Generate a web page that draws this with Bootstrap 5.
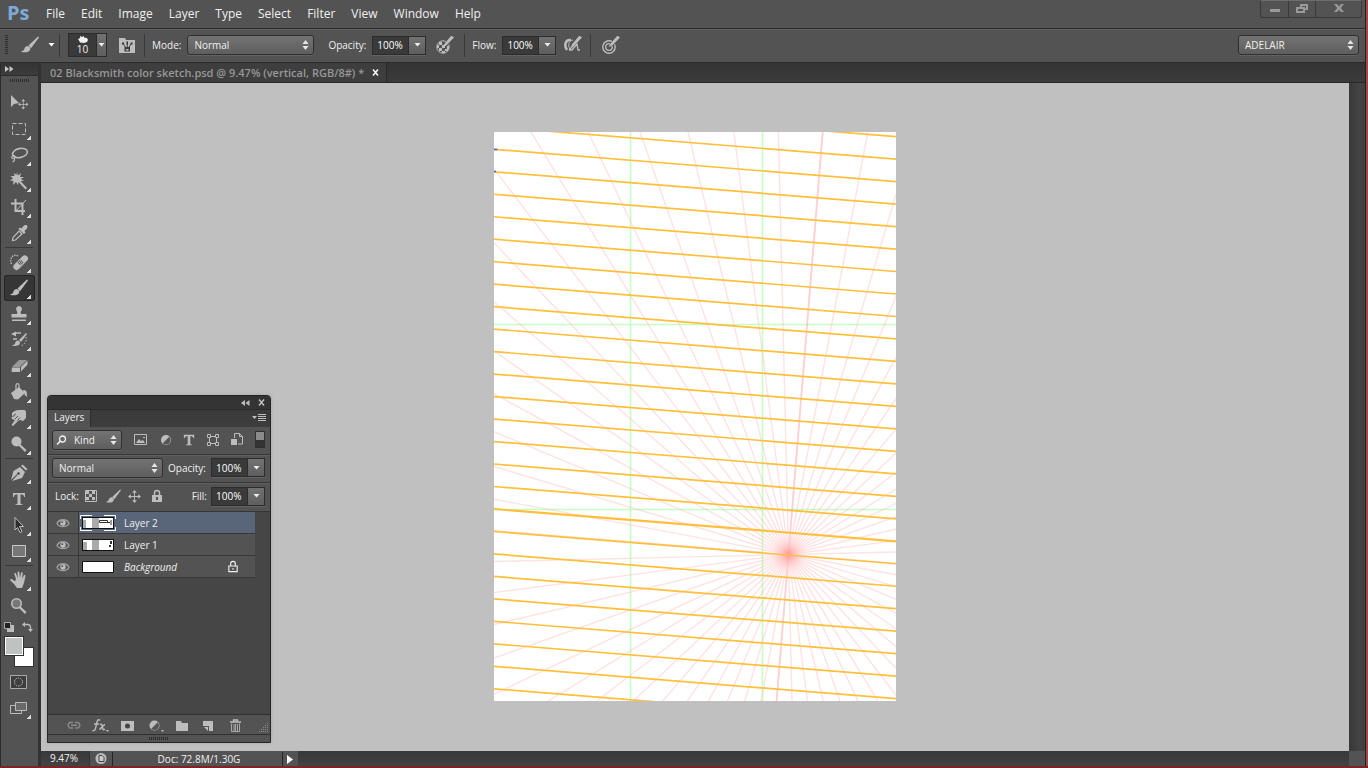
<!DOCTYPE html>
<html lang="en" data-bs-theme="dark">
<head>
<meta charset="utf-8">
<meta name="viewport" content="width=device-width, initial-scale=1">
<title>02 Blacksmith color sketch.psd</title>
<link rel="stylesheet" href="https://cdn.jsdelivr.net/npm/bootstrap@5.3.0/dist/css/bootstrap.min.css">
<style>
:root{--bar:#535353;--line:#2b2b2b;--deep:#3a3a3a;--icon:#bdbdbd;--txt:#f0f0f0}
body{font:10px/14px "Open Sans","Noto Sans",sans-serif;color:var(--txt);background:var(--bar);overflow:hidden}
svg{display:block;fill:currentColor}
button,.tool{background:none;border:0;padding:0;color:var(--icon);display:flex;align-items:center;justify-content:center}
a{color:inherit;text-decoration:none}
.s{fill:none;stroke:currentColor}
.app{border-right:1px solid #222}
.edge{width:2px;background:#a0484b}
.foot-edge{height:2px;background:#7d2226}
.menubar{height:29px;border-bottom:1px solid var(--line);padding-left:7px}
.logo{font:bold 20px/26px "Open Sans",sans-serif;color:#7ca9d8;width:31px}
.menubar .menu{font-size:12px;line-height:28px;padding:0 8px}
.winbtns{height:18px;border:1px solid #3a3a3a;border-top:1px solid #6c6c6c;border-radius:0 0 3px 3px;margin-right:3px;color:#9a9a9a}
.winbtns button{width:27px;color:#9a9a9a}
.winbtns button+button{border-left:1px solid #3a3a3a}
.winbtns .close-w{width:46px}
.options{height:34px;border-top:1px solid #626262;border-bottom:1px solid var(--line);padding:0 6px 2px 5px}
.grip{width:3px;height:20px;background:repeating-linear-gradient(#2d2d2d 0 1px,transparent 1px 2px)}
.vsep{width:1px;height:23px;background:#393939;margin:0 7px}
.m3{margin-left:3px}.m6{margin-left:6px}.m10{margin-left:10px}.m12{margin-left:12px}.m14{margin-left:14px}
.sel{appearance:none;height:20px;border:1px solid #303030;border-radius:3px;color:var(--txt);font:inherit;padding:0 6px;outline:0;
 background:url("data:image/svg+xml,%3Csvg xmlns='http://www.w3.org/2000/svg' width='7' height='10'%3E%3Cpath fill='%23e6e6e6' d='M3.500 0L6.500 4H.5zM3.500 10L.5 6h6z'/%3E%3C/svg%3E") no-repeat right 4px center,linear-gradient(#737373,#5e5e5e);box-shadow:0 1px 0 #626262}
.mode{width:127px}.work{width:121px}.kind{width:70px;padding-left:21px}.blend{width:111px}
.pct{height:19px;border:1px solid #2c2c2c;box-shadow:0 1px 0 #626262;background:#3a3a3a;width:54px}
.pct input{width:35px;background:#3a3a3a;border:0;color:#fff;font:inherit;padding:0 0 0 4px;outline:0}
.pct button,.preset button{flex:1;background:linear-gradient(#727272,#5e5e5e);border-left:1px solid #2c2c2c;color:#eee}
.preset{width:39px;height:24px;border:1px solid #2c2c2c;background:#3a3a3a}
.preset .tip{width:27px;line-height:11px}
.rail{width:41px;border-left:1px solid var(--line);border-right:3px solid #333;background:var(--bar)}
.rail-head{height:13px;background:linear-gradient(#343434,#3c3c3c);border-bottom:1px solid var(--line);padding-left:4px;color:#c8c8c8}
.rail-grip{height:14px;padding-bottom:6px}
.dots{width:20px;height:3px;background:repeating-linear-gradient(90deg,#2d2d2d 0 1px,transparent 1px 2px)}
.tool{width:31px;height:26px;margin-left:3px;padding-right:2px;position:relative;border-radius:3px}
.tool.on{background:#363636;box-shadow:inset 0 0 0 1px #262626}
.more::after{content:"";position:absolute;right:4px;bottom:2px;width:4px;height:4px;background:linear-gradient(135deg,transparent 50%,#ddd 50%)}
.rsep{height:1px;margin:1px 5px 1px 4px;background:#383838}
.mini{height:17px;padding:0 5px 2px 3px}
.swatches{height:31px;width:30px;margin:0 0 2px 3px;position:relative}
.swatches span{position:absolute;width:20px;height:20px;border:1px solid #303030}
.swatches .bgc{right:0;bottom:0;background:#fff}
.swatches .fgc{left:0;top:0;background:#c0c2c1;box-shadow:inset 0 0 0 1px #fff}
.tabs{height:20px;background:linear-gradient(#343434,#3b3b3b);border-bottom:1px solid #282828}
.doc-tab{font-weight:600;font-size:11px;color:#979797;padding:0 7px 0 9px;border-right:1px solid #282828;gap:8px;background:#3e3e3e}
.work-area{background:#c0c0c0;position:relative;min-width:0;padding-bottom:2px}
.vbar{width:16px;background:linear-gradient(90deg,#383838,#434343 60%,#404040)}
.status{height:15px;background:linear-gradient(#383838,#434343)}
.status .zoom{width:48px;padding-left:9px}
.status .info{background:var(--bar);border-left:1px solid #333}
.doc-size{width:171px;border-right:1px solid #333;padding-left:3px}
.corner{width:16px;background:var(--bar)}
.paper{width:402px;height:569px;background:#fff}
.panel{position:absolute;left:6px;top:312px;width:224px;height:348px;border:1px solid #262626;border-radius:4px 4px 0 0;background:var(--bar);box-shadow:0 0 3px #8888}
.panel-head{height:14px;background:#343434;border-bottom:1px solid #2a2a2a;border-radius:4px 4px 0 0;padding:0 5px;gap:8px;color:#c8c8c8}
.panel-tabs{height:17px;background:linear-gradient(#3a3a3a,#3d3d3d);padding-right:4px}
.panel-tabs a{background:var(--bar);padding:0 6px;line-height:15px;border-right:1px solid #2d2d2d}
.prow{height:28px;border-bottom:1px solid #363636;padding:0 5px 2px 4px;box-shadow:0 1px 0 #606060}
.toggle{width:10px;height:17px;background:linear-gradient(#8b8b8b 50%,#333 50%);border:1px solid #303030}
.layers{background:#464646;padding-right:15px;border-top:1px solid #363636}
.lay{height:22px;border-bottom:1px solid #383838;background:var(--bar)}
.lay .eye{width:31px;height:21px;border-right:1px solid #383838;background:var(--bar)}
.lay.cur{background:#596578}
.lay .nm{padding-left:8px;flex:1}
.lay .thumb{margin-left:1px}
.pfoot{height:20px;border-top:1px solid #2f2f2f;padding:2px 1px 0 12px}
.pfoot button{width:27px}
.pgrip{height:8px;border-top:1px solid #303030}
</style>
</head>
<body>
<svg width="0" height="0" class="position-absolute" aria-hidden="true">
 <symbol id="down" viewBox="0 0 7 4"><path d="M.5 0h6L3.500 3.500z"/></symbol>
 <symbol id="brush" viewBox="0 0 20 18"><path d="M19 1.500L18 .5 8.500 9.500l2.500 2.800zM8 10c-2 0-3.200 1.200-3.700 3C4 14.500 2.500 15 1 15.500c3 1.500 8 1 9-1.500.5-1.300.3-2-.3-2.800z"/></symbol>
 <symbol id="eye" viewBox="0 0 14 10"><path d="M1 5.500C3 .5 11 .5 13 5.500 11 9.500 3 9.500 1 5.500z" fill="none" stroke="#a0a0a0" stroke-width="1.300"/><circle cx="7" cy="5" r="2.700"/><circle cx="6.300" cy="4.200" r=".9" fill="#555"/></symbol>
 <symbol id="lock" viewBox="0 0 12 14"><path d="M3.500 6V4a2.500 2.500 0 0 1 5 0v2" class="s" stroke-width="1.500"/><path fill-rule="evenodd" d="M1 6h10v7H1zm4 2v3h2V8z"/></symbol>
 <symbol id="typ" viewBox="0 0 14 14"><path d="M1 1h12v4h-1c0-2-1-2.500-3.500-2.500V11c0 1 .5 1.200 2 1.200V13h-7v-.8c1.500 0 2-.2 2-1.200V2.500C3 2.500 2 3 2 5H1z"/></symbol>
 <symbol id="half" viewBox="0 0 12 12"><circle cx="6" cy="6" r="5"/><path d="M9.200 2.800a4.500 4.500 0 0 1-6.400 6.400z" fill="#555"/></symbol>
 <symbol id="move4" viewBox="0 0 14 14"><path d="M7 0l2.500 3h-2v3.500H11v-2L14 7l-3 2.500v-2H7.500V11h2L7 14l-2.500-3h2V7.500H3v2L0 7l3-2.500v2h3.500V3h-2z"/></symbol>
 <symbol id="pen-s" viewBox="0 0 18 18"><path d="M17 1.500L10 9l-2 .8L9 8l6.500-7.500z" stroke="currentColor" stroke-width="1.300"/></symbol>
</svg>

<div class="d-flex flex-column vh-100">
<div class="d-flex flex-grow-1">
<div class="app d-flex flex-column flex-grow-1">
 <header class="menubar d-flex align-items-start">
  <span class="logo">Ps</span>
  <nav class="d-flex flex-grow-1" aria-label="Application">
   <a class="menu" href="#">File</a><a class="menu" href="#">Edit</a><a class="menu" href="#">Image</a><a class="menu" href="#">Layer</a><a class="menu" href="#">Type</a><a class="menu" href="#">Select</a><a class="menu" href="#">Filter</a><a class="menu" href="#">View</a><a class="menu" href="#">Window</a><a class="menu" href="#">Help</a>
  </nav>
  <div class="winbtns d-flex">
   <button aria-label="Minimize"><svg width="12" height="12"><path d="M1 6h10v3H1z"/></svg></button>
   <button aria-label="Restore"><svg width="12" height="12"><path fill-rule="evenodd" d="M4 1h8v6H9v3H0V4h4zm2 2v1h3v1h1V3zM2 6v2h5V6z"/></svg></button>
   <button class="close-w" aria-label="Close"><svg width="12" height="12"><path d="M1 1h3l2 2.500L8 1h3L7.700 5 11 9H8L6 6.700 4 9H1l3.300-4z"/></svg></button>
  </div>
 </header>

 <div class="options d-flex align-items-center">
  <div class="grip"></div>
  <button class="m12" aria-label="Brush tool"><svg width="20" height="18"><use href="#brush"/></svg></button>
  <button class="ms-1 text-white" aria-label="Tool presets"><svg width="7" height="4" class="mx-1"><use href="#down"/></svg></button>
  <div class="vsep ms-0 me-2"></div>
  <div class="preset d-flex">
   <div class="tip text-center"><svg width="12" height="10" class="mx-auto"><path d="M1 5l2-1 0-2 2 1 2-1 0 1.500 3 .5 1 2-1 2-3 1-4-.5-1-2z"/></svg>10</div>
   <button aria-label="Brush picker"><svg width="7" height="4"><use href="#down"/></svg></button>
  </div>
  <button class="ms-2 ps-1" aria-label="Brush panel"><svg width="17" height="17"><path d="M0 1h6l1 2h9v13H0z"/><path d="M3 5.500h2v2H3zM7.500 4.500h1.500v3H7.500zM11.500 5.500h2v2h-2z" fill="#333"/><path d="M4.500 7l2.500 4M12 7l-2.500 4M8.300 7v4" stroke="#444"/><path fill-rule="evenodd" d="M5.500 10h5.500v4.500H5.500zM7 12v1.500h2.500V12z" fill="#3c3c3c"/></svg></button>
  <div class="vsep ms-2 me-1"></div>
  <label for="mode" class="m3">Mode:</label>
  <select id="mode" class="sel mode m6"><option>Normal</option></select>
  <label for="op" class="m14">Opacity:</label>
  <div class="pct d-flex m6"><input id="op" value="100%"><button aria-label="Opacity slider"><svg width="7" height="4"><use href="#down"/></svg></button></div>
  <button class="m6 ps-1" aria-label="Pressure opacity"><svg width="18" height="18"><circle cx="7" cy="11" r="6.200" class="s"/><path d="M3 6h3v3H3zM9 6h2v3H9zM6 9h3v3H6zM1 9h2v3H1zM11 10h2v3h-2zM3 12h3v3H3zM9 13h3v2H9zM6 15h3v2H6z"/><path d="M17 1.500L9 9" stroke="#535353" stroke-width="4"/><use href="#pen-s"/></svg></button>
  <div class="vsep m10"></div>
  <label for="flow">Flow:</label>
  <div class="pct d-flex m6"><input id="flow" value="100%"><button aria-label="Flow slider"><svg width="7" height="4"><use href="#down"/></svg></button></div>
  <button class="ms-1 ps-1" aria-label="Airbrush"><svg width="18" height="18"><path d="M7 4C1 3 0 10 3 14" class="s" stroke-width="2.500"/><path d="M9 4C4 5 4 10 6 13" class="s"/><path d="M5 14l5-5M5 14h3l5-6 1 6h2" class="s" stroke-width="1.300"/><use href="#pen-s"/></svg></button>
  <div class="vsep ms-2"></div>
  <button class="ps-1" aria-label="Pressure size"><svg width="18" height="18"><circle cx="7" cy="11" r="6.200" class="s" stroke-width="1.400"/><circle cx="7" cy="11" r="3.300" class="s" stroke-width="1.300"/><path d="M17 1.500L9 9" stroke="#535353" stroke-width="4"/><use href="#pen-s"/></svg></button>
  <select class="sel work ms-auto" aria-label="Workspace"><option>ADELAIR</option></select>
 </div>

 <div class="d-flex flex-grow-1">
  <aside class="rail flex-shrink-0" aria-label="Tools">
   <div class="rail-head d-flex align-items-center"><svg width="9" height="6"><path d="M0 0l4 3-4 3zM4.500 0l4 3-4 3z"/></svg></div>
   <div class="rail-grip d-flex align-items-center justify-content-center"><div class="dots"></div></div>
   <button class="tool" aria-label="Move"><svg width="20" height="18"><path d="M2 1v12l3-3 5-1z"/><g transform="translate(9 5) scale(.75)"><use href="#move4" width="14" height="14"/></g></svg></button>
   <button class="tool more" aria-label="Marquee"><svg width="20" height="18"><path d="M3.500 3.500h13v11h-13z" class="s" stroke-dasharray="4 2"/></svg></button>
   <button class="tool more" aria-label="Lasso"><svg width="20" height="18"><ellipse cx="11" cy="7" rx="7.500" ry="4.500" class="s" stroke-width="1.600" transform="rotate(-12 11 7)"/><path d="M5 9.500c-3 0-3 3-.5 3s2-2.500.5-3M5 12.500c1 1.500 0 3-1.500 3.500" class="s" stroke-width="1.200"/></svg></button>
   <button class="tool more" aria-label="Magic wand"><svg width="20" height="18"><path d="M8 0l1 3.500L12 1l-1 4 4 0-3 2 3 2-3.500 0L18 16l-1.500 1.500L9.500 10 9 13l-2-3-3 3 .5-4L1 8.500 4 6.500 1.500 4 5.500 4 5 1l2.500 2z"/></svg></button>
   <button class="tool more" aria-label="Crop"><svg width="20" height="18"><path d="M6.500 1v12H16M2 5.500h11.500V17" class="s" stroke-width="2"/><path d="M7 13L17 2" class="s"/></svg></button>
   <button class="tool more" aria-label="Eyedropper"><svg width="20" height="18"><path d="M10 7l3 3-6.500 6-3 .5L4 13.500z" class="s" stroke-width="1.200"/><path d="M9.500 5l1.500-1.500 1.500 1L15 1.500c2-1.500 4.500.5 3 3L15.500 7l1 1.500L15 10z"/></svg></button>
   <div class="rsep"></div>
   <button class="tool more" aria-label="Healing brush"><svg width="20" height="18"><path d="M9 3c-5-3-9 3-6.500 8" class="s" stroke-width="1.300" stroke-dasharray="1.500 1"/><rect x="2.500" y="6.500" width="18" height="6.500" rx="3.200" transform="rotate(-45 11.500 9.500)"/><path d="M8.500 9.500l3-3 3 3-3 3z" fill="#666"/><path d="M10 9h1v1h-1zM12 9h1v1h-1zM11 7.500h1v1h-1zM11 10.500h1v1h-1z"/></svg></button>
   <button class="tool more on" aria-label="Brush"><svg width="20" height="18"><use href="#brush"/></svg></button>
   <button class="tool more" aria-label="Clone stamp"><svg width="20" height="18"><path d="M10 1a3 3 0 0 1 2.500 4.500C11.500 7 11.500 8 12 9h5.500v3.500H2.500V9H8c.5-1 .5-2-.5-3.500A3 3 0 0 1 10 1zM3 14.500h14V16H3z"/></svg></button>
   <button class="tool more" aria-label="History brush"><svg width="20" height="18"><path d="M18 3l-1-1-7 7 2 2zM9.500 9.500c-2 0-3 1-3.300 2.500-.3 1.500-2 2-3.500 2.500 3 1 7 .5 8-1.500.4-1 .3-1.500-.2-2.200z"/><path d="M12 2H6M4 8h4" class="s" stroke-width="1.500"/><path d="M2 3l5-2.500v5z"/><path d="M17 6c1 4-1 7-5 9" class="s" stroke-dasharray="1.500 1.500"/></svg></button>
   <button class="tool more" aria-label="Eraser"><svg width="20" height="18"><path d="M10 3h8l-7 7H3z" fill="#999"/><path d="M3 10.500h8V15H2.500zM12 10l6.500-6.500v4L12 14.500z"/></svg></button>
   <button class="tool more" aria-label="Paint bucket"><svg width="20" height="18"><path d="M7 8V2.500C7 0 10 0 10 2.500V8" class="s" stroke-width="1.200"/><path d="M2 10l8-6 6 6-7 6.500-4-.5z"/><path d="M14 7c4 0 4 2 4 7-2-1-2.500-3-3-4z"/></svg></button>
   <button class="tool more" aria-label="Smudge"><svg width="20" height="18"><path d="M3 4c2-2 4-3 7-3h6l1 2v6l-3 3-3-1-2 1-5 5-1.500-1L6 11l-3-1-.5-2L6 7 3 7z"/><path d="M7 5l-3 2M9 7l-3 3M11 8.500l-2.500 3" stroke="#555" fill="none"/></svg></button>
   <button class="tool more" aria-label="Dodge"><svg width="20" height="18"><circle cx="7.500" cy="6.500" r="5"/><path d="M11 9l6.500 6L16 17l-6.500-6.500z"/></svg></button>
   <div class="rsep"></div>
   <button class="tool more" aria-label="Pen"><svg width="20" height="18"><path d="M12 2l1.500-1.500 5 4.500L17 6.500zM11 3l5 5-3 6-10 3L8.500 11 8 10l-6 6L4.500 7z"/><circle cx="9.500" cy="9.500" r="1.300" fill="#444"/></svg></button>
   <button class="tool more" aria-label="Type"><svg width="14" height="14"><use href="#typ"/></svg></button>
   <button class="tool more" aria-label="Path selection"><svg width="20" height="18"><path d="M6 1.500l8.500 9h-4l2.500 5-2 1-2.500-5L6 14z" fill="#2c2c2c" stroke="#bbb"/></svg></button>
   <button class="tool more" aria-label="Rectangle"><svg width="20" height="18"><path d="M3.500 3.500h13v11h-13z" fill="#777" stroke="#c8c8c8"/></svg></button>
   <div class="rsep"></div>
   <button class="tool more" aria-label="Hand"><svg width="20" height="18"><path d="M7 8L5.300 3c-.3-1.300 1.200-1.500 1.600-.5L8.800 7 8.500 1.500C8.500.3 10.300.3 10.400 1.500L11 7l1-5c.3-1 1.800-.8 1.700.4L13.200 8l1.600-3.500c.6-1 2-.3 1.600.8L15 12l-2 5H8l-3-4-3.500-3.500c-1-1.300.5-2 1.500-1.200l3 2z"/></svg></button>
   <button class="tool" aria-label="Zoom"><svg width="20" height="18"><circle cx="7.500" cy="6.500" r="4.700" fill="#777" stroke="#bbb" stroke-width="1.600"/><path d="M11 9l6.500 6L16 17l-6.500-6.500z"/></svg></button>
   <div class="mini d-flex justify-content-between align-items-center">
    <button aria-label="Default colors"><svg width="10" height="10"><path d="M3 3h7v7H3z"/><path d="M.5.5h6v6h-6z" fill="#222" stroke="#aaa"/></svg></button>
    <button aria-label="Swap colors"><svg width="11" height="10"><path d="M2 2.500h3.500q3 0 3 3V8" class="s" stroke-width="1.300"/><path d="M0 2.500L3 0v5zM8.500 10L6 7h5z"/></svg></button>
   </div>
   <div class="swatches"><span class="bgc"></span><span class="fgc"></span></div>
   <button class="tool" aria-label="Quick mask"><svg width="18" height="14"><path d="M.5.5h16v13H.5z" fill="#3e3e3e" stroke="#aaa"/><circle cx="8.500" cy="7" r="4" class="s" stroke-dasharray="1.500 1"/></svg></button>
   <button class="tool more" aria-label="Screen mode"><svg width="18" height="14"><path d="M.5 4.500h11v8H.5z" class="s"/><path d="M5.500 1.500h11v8h-11z" fill="#6a6a6a" stroke="#bbb"/></svg></button>
  </aside>

  <main class="d-flex flex-column flex-grow-1">
   <div class="tabs d-flex">
    <div class="doc-tab d-flex align-items-center"><span>02 Blacksmith color sketch.psd @ 9.47% (vertical, RGB/8#) *</span>
     <button class="text-light" aria-label="Close document"><svg width="7" height="7"><path d="M1 .5l5 6M6 .5l-5 6" class="s" stroke-width="1.500"/></svg></button></div>
   </div>
   <div class="d-flex flex-grow-1">
    <div class="work-area flex-grow-1 d-flex align-items-center justify-content-center">
     <svg class="paper" viewBox="0 0 402 569" role="img" aria-label="Perspective grid">
      <defs><radialGradient id="glow"><stop offset="0" stop-color="#ff9c98" stop-opacity=".7"/><stop offset=".4" stop-color="#ffb4b4" stop-opacity=".4"/><stop offset="1" stop-color="#ffd0d0" stop-opacity="0"/></radialGradient></defs>
      <path d="M136.500 0v569M268.500 0v569M0 192.500h402M0 377.500h402" stroke="#c6ffc2" stroke-width="1.600"/>
      <g id="rays" stroke="#ffa0a0" stroke-opacity=".3" stroke-width="1.400"></g>
      <circle cx="294.500" cy="422.500" r="18" fill="url(#glow)"/>
      <g id="rules" stroke="#ffbf3c" stroke-width="1.700"></g>
      <path d="M0 17.500h3.500M0 39.500h2" stroke="#3a62f0" stroke-width="1.400"/>
     </svg>

     <section class="panel d-flex flex-column" aria-label="Layers panel">
      <div class="panel-head d-flex align-items-center justify-content-end">
       <button aria-label="Collapse"><svg width="9" height="6"><path d="M4 0L0 3l4 3zM8.500 0l-4 3 4 3z"/></svg></button>
       <button aria-label="Close panel"><svg width="7" height="7"><path d="M1 .5l5 6M6 .5l-5 6" class="s" stroke-width="1.500"/></svg></button>
      </div>
      <div class="panel-tabs d-flex justify-content-between align-items-stretch"><a href="#">Layers</a>
       <button aria-label="Panel menu"><svg width="14" height="9"><path d="M0 2h5L2.500 5zM6 0h8v1H6zM6 2h8v1H6zM6 4h8v1H6zM6 6h8v1H6z"/></svg></button></div>
      <div class="prow d-flex align-items-center justify-content-between">
       <div class="position-relative"><select class="sel kind" aria-label="Filter kind"><option>Kind</option></select>
        <svg width="11" height="11" class="position-absolute top-50 start-0 translate-middle-y ms-1"><circle cx="6.500" cy="4.500" r="3" class="s" stroke-width="1.300"/><path d="M4.500 6.500L1 10" class="s" stroke-width="1.600"/></svg></div>
       <button aria-label="Pixel layers"><svg width="14" height="12"><path d="M.5.5h12v10H.5z" class="s"/><path d="M2 9l3-4 2 2 2-1 2 3zM9 3h2v1H9z"/></svg></button>
       <button aria-label="Adjustment layers"><svg width="12" height="12"><use href="#half"/></svg></button>
       <button aria-label="Type layers"><svg width="12" height="12"><use href="#typ"/></svg></button>
       <button aria-label="Shape layers"><svg width="12" height="12"><path d="M2.500 2.500h7v7h-7z" class="s"/><path d="M.5.5h3v3h-3zM8.500.5h3v3h-3zM.5 8.500h3v3h-3zM8.500 8.500h3v3h-3z" fill="#535353" stroke="currentColor"/></svg></button>
       <button aria-label="Smart objects"><svg width="12" height="13"><path d="M3.500 5V.5h5l3 3V11H7M8.500.5v3h3" class="s"/><path d="M0 6h6v6H0z"/></svg></button>
       <button class="toggle" aria-label="Filter on"></button>
      </div>
      <div class="prow d-flex align-items-center justify-content-between">
       <select class="sel blend" aria-label="Blend mode"><option>Normal</option></select>
       <label for="lop">Opacity:</label>
       <div class="pct d-flex"><input id="lop" value="100%"><button aria-label="Layer opacity slider"><svg width="7" height="4"><use href="#down"/></svg></button></div>
      </div>
      <div class="prow d-flex align-items-center border-bottom-0 shadow-none">
       <span class="m3">Lock:</span>
       <button class="m6" aria-label="Lock transparency"><svg width="12" height="12"><path d="M.5.5h11v11H.5z" class="s"/><path d="M1 1h3v3H1zM7 1h3v3H7zM4 4h3v3H4zM1 7h3v3H1zM7 7h3v3H7z"/></svg></button>
       <button class="ms-2" aria-label="Lock pixels"><svg width="17" height="15"><use href="#brush"/></svg></button>
       <button class="m6" aria-label="Lock position"><svg width="13" height="13"><use href="#move4"/></svg></button>
       <button class="m10" aria-label="Lock all"><svg width="12" height="14"><use href="#lock"/></svg></button>
       <label for="fill" class="ms-auto me-1">Fill:</label>
       <div class="pct d-flex"><input id="fill" value="100%"><button aria-label="Fill slider"><svg width="7" height="4"><use href="#down"/></svg></button></div>
      </div>
      <div class="layers flex-grow-1">
       <div class="lay cur d-flex align-items-center"><button class="eye" aria-label="Toggle Layer 2"><svg width="14" height="10"><use href="#eye"/></svg></button>
        <svg class="thumb" width="36" height="16"><path d="M2 2h32v12H2z" fill="#111"/><path d="M3 3h30v10H3z" fill="#fff"/><path d="M3 5h3v8H3zM12 3h7v10h-7z" fill="#aaa"/><path d="M19.500 5.500h8v2h-8zM27 7.500h3M31 5v5" stroke="#333" fill="none"/><path d="M.5 4V.5H12M24 .5h11.500V4M.5 12v3.500H12M24 15.500h11.500V12" fill="none" stroke="#fff"/></svg>
        <span class="nm">Layer 2</span></div>
       <div class="lay d-flex align-items-center"><button class="eye" aria-label="Toggle Layer 1"><svg width="14" height="10"><use href="#eye"/></svg></button>
        <svg class="thumb" width="36" height="16"><path d="M2 2h32v12H2z" fill="#111"/><path d="M3 3h30v10H3z" fill="#fff"/><path d="M3 5h4v8H3zM12 3h7v10h-7z" fill="#aaa"/><path d="M30 4h2v3h-2zM29 8h2v2h-2z" fill="#333"/></svg>
        <span class="nm">Layer 1</span></div>
       <div class="lay d-flex align-items-center"><button class="eye" aria-label="Toggle Background"><svg width="14" height="10"><use href="#eye"/></svg></button>
        <svg class="thumb" width="36" height="16"><path d="M2.500 2.500h31v11h-31z" fill="#fff" stroke="#111"/></svg>
        <span class="nm fst-italic">Background</span>
        <svg class="me-3" width="12" height="13" viewBox="0 0 12 14"><path d="M3.500 6V4a2.500 2.500 0 0 1 5 0v2M1.500 6.500h9v6h-9zM6 8.500v2" class="s" stroke="#bbb" stroke-width="1.200"/></svg></div>
      </div>
      <div class="pfoot d-flex align-items-center">
       <button class="opacity-50" aria-label="Link layers"><svg width="16" height="9"><path d="M7 7H4a3 3 0 0 1 0-5.500h3M9 1.500h3A3 3 0 0 1 12 7H9M5 4.300h6" class="s" stroke-width="1.500"/></svg></button>
       <button aria-label="Layer style"><svg width="18" height="14"><path d="M8 1.500C6-.5 5 2 4.500 5S3 13 .5 11.500M2 5h5M8 5.500c2-1 2 .5 2.500 3s1 3 2.500 1.500M13 5.500C11 6 9.500 9 7.500 10.500" class="s" stroke-width="1.400"/><path d="M14 11h3l-1.500 2z"/></svg></button>
       <button aria-label="Add mask"><svg width="14" height="12"><path d="M0 1h13v10H0z"/><circle cx="6.500" cy="6" r="2.500" fill="#444"/></svg></button>
       <button aria-label="Adjustment layer"><svg width="18" height="14"><g transform="translate(3 1)"><circle cx="5.500" cy="5.500" r="5"/><path d="M8.700 2.300a4.500 4.500 0 0 1-6.400 6.400z" fill="#555"/></g><path d="M15 11h3l-1.500 2z"/></svg></button>
       <button aria-label="New group"><svg width="12" height="12"><path d="M0 1h5l1 2h6v8H0z"/></svg></button>
       <button aria-label="New layer"><svg width="11" height="12"><path d="M0 1h10v10H6V6H0zM1 7h4v4z"/></svg></button>
       <button aria-label="Delete layer"><svg width="11" height="13"><path d="M0 3h11M3.500 3V1h4v2" class="s" stroke-width="1.300"/><path d="M1.500 4.500v8h8v-8M4 5v7M5.500 5v7M7.500 5v7" class="s" stroke-width=".8"/></svg></button>
       <svg width="10" height="14" fill="#8a8a8a" class="ms-auto"><path fill="#8a8a8a" d="M8 4h1v1H8zM6 6h1v1H6zM8 6h1v1H8zM4 8h1v1H4zM6 8h1v1H6zM8 8h1v1H8zM2 10h1v1H2zM4 10h1v1H4zM6 10h1v1H6zM8 10h1v1H8zM0 12h1v1H0zM2 12h1v1H2zM4 12h1v1H4zM6 12h1v1H6zM8 12h1v1H8z"/></svg>
      </div>
      <div class="pgrip d-flex align-items-center justify-content-center"><div class="dots"></div></div>
     </section>
    </div>
    <div class="vbar"></div>
   </div>
   <footer class="status d-flex">
    <div class="zoom">9.47%</div>
    <div class="info d-flex align-items-center">
     <button class="px-1" aria-label="Preview"><svg width="14" height="13"><circle cx="7" cy="6.500" r="5.500"/><path d="M5 3.500h3l2 2v4H5z" fill="#ccc" stroke="#444"/></svg></button>
     <div class="doc-size text-center border-start border-dark">Doc: 72.8M/1.30G</div>
     <button class="px-1 text-white" aria-label="Status menu"><svg width="7" height="10"><path d="M0 1l6 4.500L0 10z"/></svg></button>
    </div>
    <div class="corner ms-auto"></div>
   </footer>
  </main>
 </div>
</div>
<div class="edge"></div>
</div>
<div class="foot-edge"></div>
</div>

<script src="https://cdn.jsdelivr.net/npm/bootstrap@5.3.0/dist/js/bootstrap.bundle.min.js"></script>
<script>
const NS = "http://www.w3.org/2000/svg";
function line(parent, x1, y1, x2, y2, extra) {
  const l = document.createElementNS(NS, "line");
  Object.entries(Object.assign({x1, y1, x2, y2}, extra)).forEach(([k, v]) => l.setAttribute(k, v));
  parent.appendChild(l);
}
// rays every six degrees from the vanishing point
const cx = 294.5, cy = 422.5;
for (let i = 0; i < 30; i++) {
  const a = (4.63 + i * 6) * Math.PI / 180, dx = 700 * Math.sin(a), dy = 700 * Math.cos(a);
  line(rays, cx - dx, cy + dy, cx + dx, cy - dy, i === 0 ? {"stroke-width": 1.8, "stroke-opacity": .5} : {});
}
// evenly spaced parallel rules
for (let k = -2; k <= 24; k++) {
  const y = 17.3 + k * 22.48;
  line(rules, 0, y, 402, y + 32.3, k === 16 ? {"stroke-width": 2.2} : {});
}
</script>
</body>
</html>
